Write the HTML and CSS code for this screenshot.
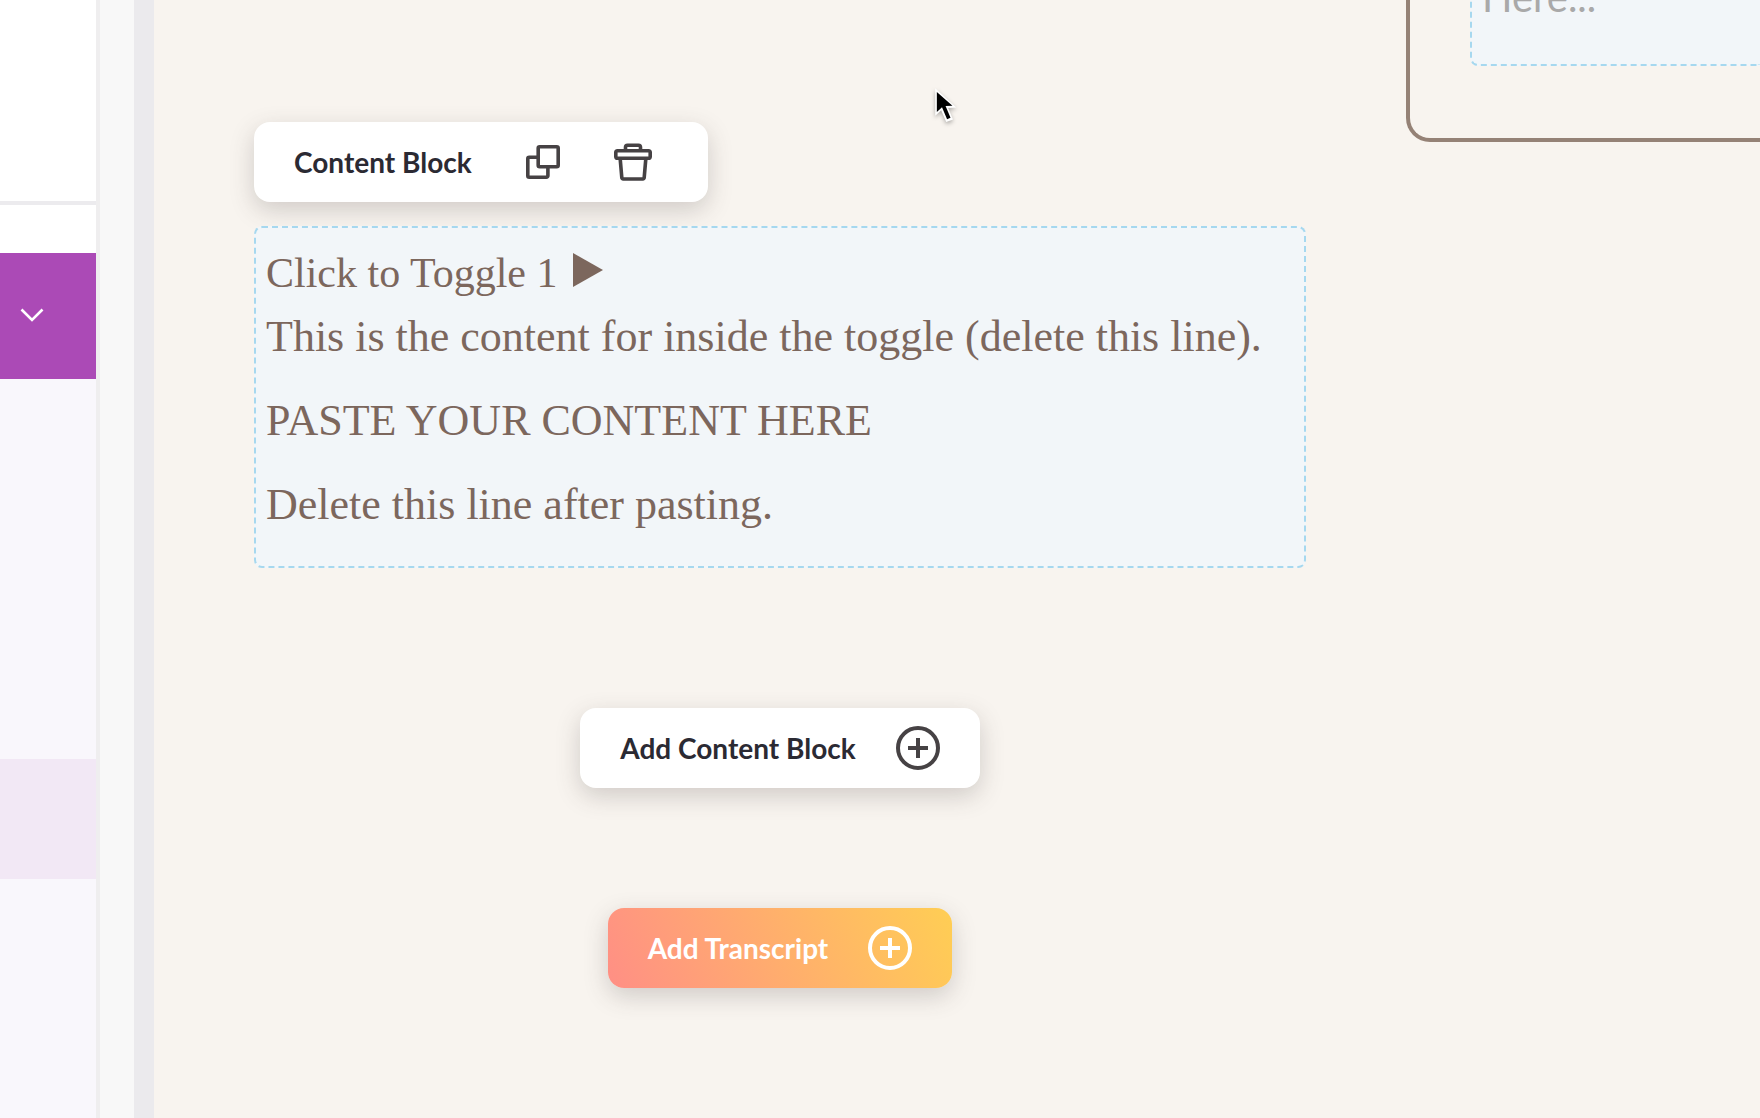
FILE: index.html
```
<!DOCTYPE html>
<html lang="en">
<head>
	<meta charset="UTF-8">
	<title>Page Editor</title>
	<link rel="stylesheet" href="styles.css">
</head>
<body>
	<div class="editor">
		<aside class="sidebar">
			<div class="sidebar-top"></div>
			<div class="sidebar-gap"></div>
			<button class="section-toggle" type="button" aria-label="Toggle section">
				<svg width="24" height="16" viewBox="0 0 24 16">
					<path d="M1.5 2.5 L12 13 L22.5 2.5" fill="none" stroke="#fff" stroke-width="2.6"/>
				</svg>
			</button>
			<div class="sidebar-list">
				<div class="sidebar-item"></div>
			</div>
		</aside>
		<div class="gutter"></div>
		<div class="divider"></div>

		<main class="canvas">
			<div class="column">
				<div class="toolbar">
					<span class="label">Content Block</span>
					<button class="icon-button" type="button" aria-label="Duplicate">
						<svg width="34" height="34" viewBox="0 0 34 34" fill="none" stroke="#464244" stroke-width="3.6" stroke-linejoin="round">
							<path d="M11 12.2 H3.3 a1.5 1.5 0 0 0 -1.5 1.5 V30.7 a1.5 1.5 0 0 0 1.5 1.5 H20.4 a1.5 1.5 0 0 0 1.5 -1.5 V23"/>
							<rect x="12.2" y="1.8" width="20" height="20" rx="1.5"/>
						</svg>
					</button>
					<button class="icon-button" type="button" aria-label="Delete">
						<svg width="38" height="38" viewBox="0 0 38 38" fill="none" stroke="#464244" stroke-width="3.6" stroke-linejoin="round">
							<path d="M11.5 7 V4.3 a2 2 0 0 1 2 -2 H24.5 a2 2 0 0 1 2 2 V7"/>
							<rect x="1.8" y="7.8" width="34.4" height="7.4" rx="1.8"/>
							<path d="M6.2 16 L7.8 34.6 a1.4 1.4 0 0 0 1.4 1.4 H28.8 a1.4 1.4 0 0 0 1.4 -1.4 L31.8 16"/>
						</svg>
					</button>
				</div>

				<div class="block">
					<details open>
						<summary>Click to Toggle 1<svg class="arrow" width="30" height="34" viewBox="0 0 30 34">
								<path d="M0 0 L30 17 L0 34 Z" fill="#7c675d"/>
							</svg>
						</summary>
						<p>This is the content for inside the toggle (delete this line).</p>
						<p>PASTE YOUR CONTENT HERE</p>
						<p>Delete this line after pasting.</p>
					</details>
				</div>

				<button class="add-button" type="button">
					<span class="label">Add Content Block</span>
					<svg width="44" height="44" viewBox="0 0 44 44" fill="none" stroke="#464244" stroke-width="4">
						<circle cx="22" cy="22" r="20"/>
						<path d="M22 12 V32 M12 22 H32"/>
					</svg>
				</button>

				<button class="add-button transcript" type="button">
					<span class="label">Add Transcript</span>
					<svg width="44" height="44" viewBox="0 0 44 44" fill="none" stroke="#fff" stroke-width="4">
						<circle cx="22" cy="22" r="20"/>
						<path d="M22 12 V32 M12 22 H32"/>
					</svg>
				</button>
			</div>

			<div class="card">
				<div class="block placeholder">
					<p>Here...</p>
				</div>
			</div>
		</main>
	</div>

	<svg class="cursor" width="28" height="39" viewBox="0 0 26 36">
		<path d="M3 1 L3 26.5 L8.5 21.5 L13.2 32.5 L19.5 30 L15 19.5 L22.5 19 Z" fill="#fff"/>
		<path d="M4.5 4.5 L4.5 23 L9.3 18.7 L14 29.8 L17.2 28.5 L12.6 17.6 L19 17.4 Z" fill="#000"/>
	</svg>
</body>
</html>
```
FILE: styles.css
```
* {
	box-sizing: border-box;
}

body {
	margin: 0;
	background-color: #f8f4ef;
	font-family: Lato, "Liberation Sans", sans-serif;
	overflow: hidden;
}

button {
	border: none;
	padding: 0;
	background: none;
	font: inherit;
	cursor: pointer;
}

.editor {
	display: flex;
	height: 100vh;
}

/* sidebar */
.sidebar {
	display: flex;
	flex-direction: column;
	width: 100px;
	border-right: 4px solid #efeeef;
	background-color: #ffffff;
}

.sidebar-top {
	height: 205px;
	border-bottom: 4px solid #ecebee;
}

.sidebar-gap {
	height: 48px;
}

.section-toggle {
	height: 126px;
	padding-left: 20px;
	background-color: #ab4ab6;
	text-align: left;
}

.sidebar-list {
	flex: 1;
	padding-top: 380px;
	background-color: #f9f7fc;
}

.sidebar-item {
	height: 120px;
	background-color: #f2e8f5;
}

.gutter {
	width: 34px;
	background-color: #f8f8f8;
}

.divider {
	width: 20px;
	background-color: #ebeaed;
}

/* page canvas */
.canvas {
	flex: 1;
	display: grid;
	grid-template-columns: 1fr 354px;
	align-items: start;
	gap: 100px;
	padding-left: 100px;
	overflow: hidden;
}

.column {
	display: flex;
	flex-direction: column;
	align-items: center;
	padding-top: 122px;
}

.toolbar, .add-button {
	display: flex;
	align-items: center;
	height: 80px;
	padding: 0 40px;
	border-radius: 16px;
	background-color: #ffffff;
	box-shadow: 0 8px 24px rgba(70, 60, 60, 0.22);
}

.toolbar {
	align-self: flex-start;
	gap: 54px;
	padding-right: 56px;
	margin-bottom: 24px;
}

.label {
	color: #2b2a33;
	font-size: 28px;
	font-weight: 700;
	line-height: 32px;
}

.icon-button svg, .add-button svg {
	display: block;
}

.block {
	width: 100%;
	padding: 13px 10px 9px;
	border: 2px dashed #a6d8ef;
	border-radius: 8px;
	background-color: #f2f6f9;
	color: #7c675d;
	font-family: "Liberation Serif", serif;
	font-size: 44px;
	line-height: 64px;
}

.block p {
	margin: 0 0 20px;
}

summary {
	font-size: 42px;
	list-style: none;
	cursor: pointer;
}

.arrow {
	margin-left: 16px;
}

.add-button {
	gap: 40px;
	margin-top: 140px;
}

.transcript {
	margin-top: 120px;
	background: linear-gradient(65deg, #ff8f85, #ffce54);
}

.transcript .label {
	color: #ffffff;
}

/* right card, scrolled partly out of view */
.card {
	margin-top: -114px;
	padding: 60px 0 72px 60px;
	border: 4px solid #958276;
	border-right: none;
	border-radius: 24px 0 0 24px;
}

.placeholder {
	border-right: none;
	border-radius: 8px 0 0 8px;
	color: #a9a9a9;
	font-family: Lato, "Liberation Sans", sans-serif;
	font-size: 40px;
}

.placeholder p {
	margin-bottom: 26px;
}

.cursor {
	position: absolute;
	top: 87px;
	left: 932px;
	filter: drop-shadow(0 2px 2px rgba(0, 0, 0, 0.3));
}
```
